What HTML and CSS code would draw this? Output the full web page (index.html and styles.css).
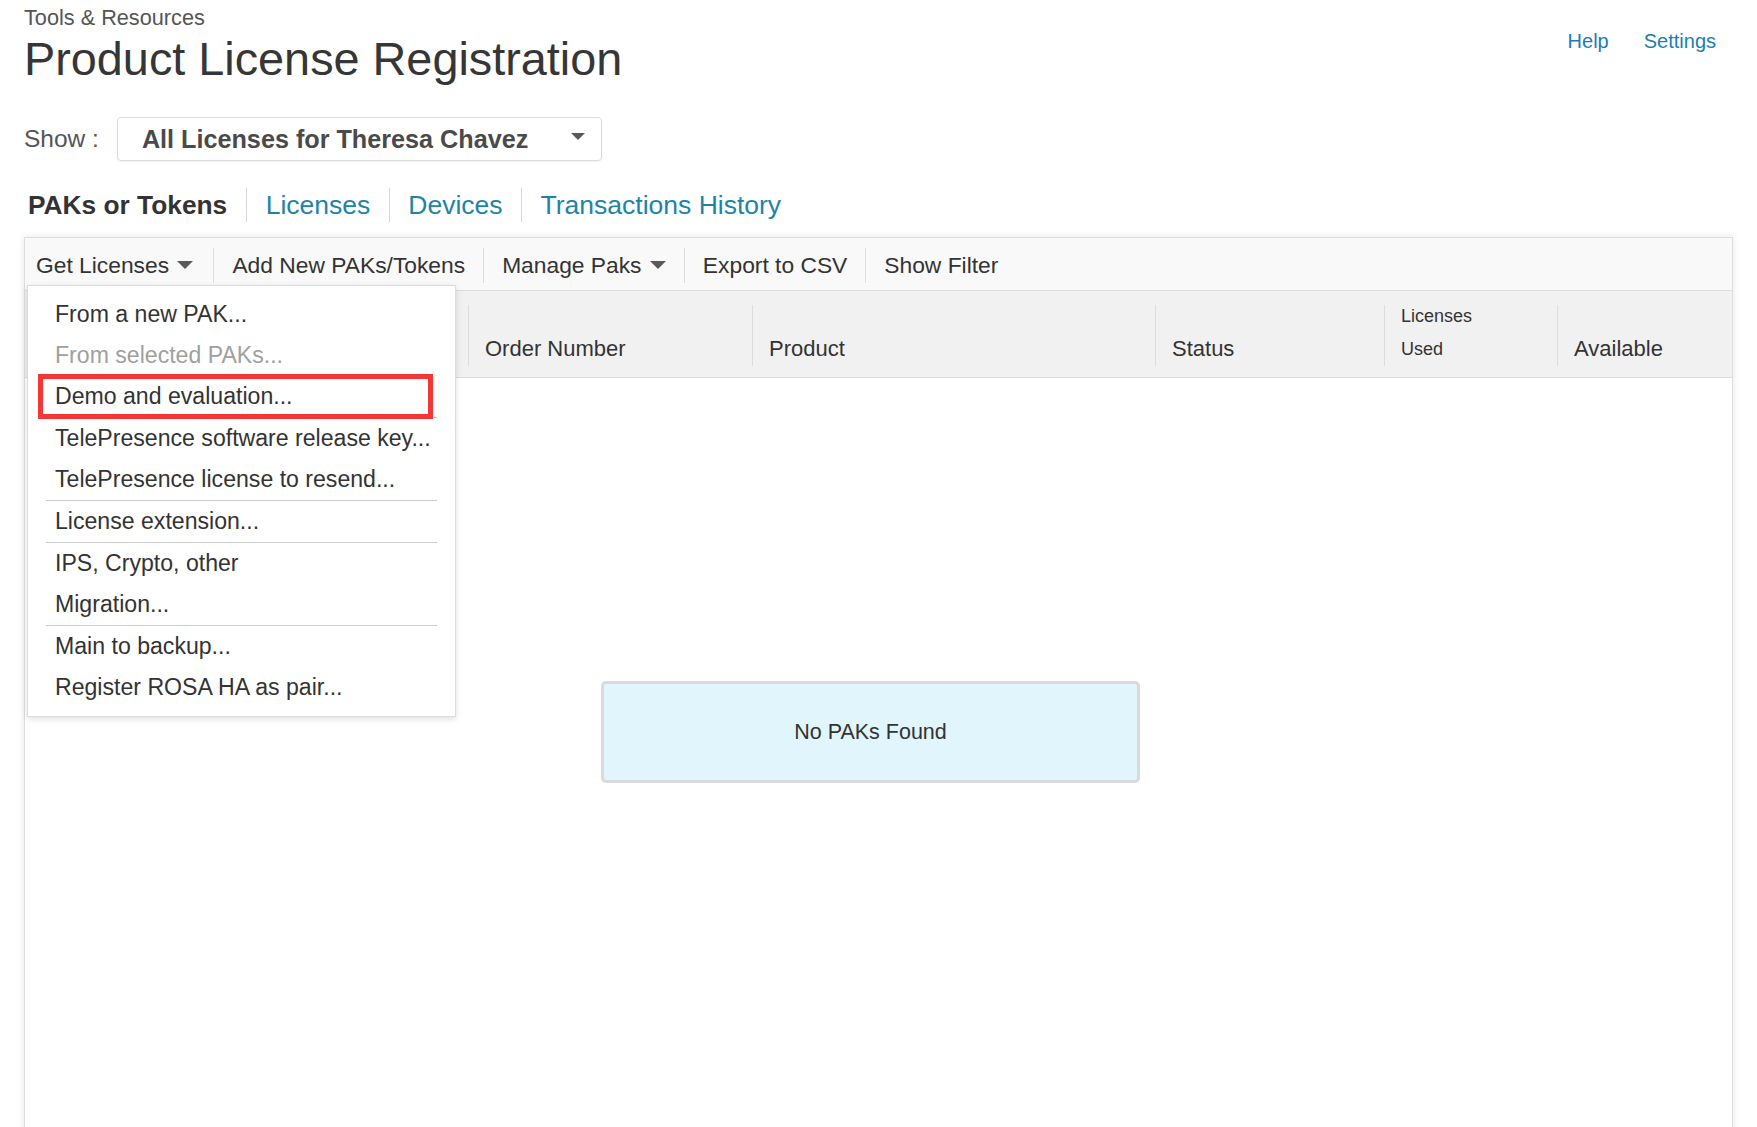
FILE: index.html
```html
<!DOCTYPE html>
<html lang="en">
<head>
<meta charset="utf-8">
<title>Product License Registration</title>
<link rel="stylesheet" href="styles.css">
</head>
<body>
<div class="page">
  <header class="top">
    <div class="titles">
      <div class="crumb">Tools &amp; Resources</div>
      <h1 class="title">Product License Registration</h1>
    </div>
    <nav class="toplinks">
      <a class="toplink" href="#">Help</a>
      <a class="toplink" href="#">Settings</a>
    </nav>
  </header>

  <div class="show-row">
    <span class="show-label">Show :</span>
    <div class="select">
      <span class="select-text">All Licenses for Theresa Chavez</span>
      <span class="caret caret-select"></span>
    </div>
  </div>

  <nav class="tabs">
    <span class="tab tab-active">PAKs or Tokens</span>
    <a class="tab" href="#">Licenses</a>
    <a class="tab" href="#">Devices</a>
    <a class="tab" href="#">Transactions History</a>
  </nav>

  <section class="card">
    <div class="toolbar">
      <div class="tool tool-first">Get Licenses <span class="caret"></span></div>
      <div class="tool">Add New PAKs/Tokens</div>
      <div class="tool">Manage Paks <span class="caret"></span></div>
      <div class="tool">Export to CSV</div>
      <div class="tool">Show Filter</div>

      <ul class="menu">
        <li class="menu-item">From a new PAK...</li>
        <li class="menu-item menu-disabled">From selected PAKs...</li>
        <li class="menu-item">Demo and evaluation...</li>
        <li class="menu-sep"></li>
        <li class="menu-item">TelePresence software release key...</li>
        <li class="menu-item">TelePresence license to resend...</li>
        <li class="menu-sep"></li>
        <li class="menu-item">License extension...</li>
        <li class="menu-sep"></li>
        <li class="menu-item">IPS, Crypto, other</li>
        <li class="menu-item">Migration...</li>
        <li class="menu-sep"></li>
        <li class="menu-item">Main to backup...</li>
        <li class="menu-item">Register ROSA HA as pair...</li>
        <li class="highlight"></li>
      </ul>
    </div>

    <div class="thead">
      <div class="th th-first"></div>
      <div class="th"><span class="th-label">Order Number</span></div>
      <div class="th"><span class="th-label">Product</span></div>
      <div class="th"><span class="th-label">Status</span></div>
      <div class="th th-small">
        <span class="th-small-label">Licenses</span>
        <span class="th-small-label">Used</span>
      </div>
      <div class="th"><span class="th-label">Available</span></div>
    </div>

    <div class="tbody">
      <div class="empty">No PAKs Found</div>
    </div>
  </section>
</div>
</body>
</html>
```

FILE: styles.css
```css
* {
  box-sizing: border-box;
}

html, body {
  margin: 0;
  padding: 0;
  background: #ffffff;
  overflow: hidden;
}

body {
  font-family: "Liberation Sans", Arial, sans-serif;
  color: #333333;
}

a {
  text-decoration: none;
}

.page {
  padding: 0 24px;
}

/* ---------- Header ---------- */
.top {
  display: flex;
  justify-content: space-between;
  align-items: flex-start;
}

.crumb {
  margin-top: 6px;
  font-size: 21.7px;
  line-height: 24px;
  color: #555555;
}

.title {
  margin: 3px 0 0 0;
  font-size: 46.8px;
  line-height: 52px;
  font-weight: normal;
  color: #363636;
}

.toplinks {
  display: flex;
  gap: 35px;
  margin-top: 30px;
  margin-right: 17px;
}

.toplink {
  font-size: 20px;
  line-height: 23px;
  color: #1d7db4;
}

/* ---------- Show select ---------- */
.show-row {
  display: flex;
  align-items: center;
  margin-top: 32px;
}

.show-label {
  font-size: 24.5px;
  color: #555555;
  margin-right: 18px;
}

.select {
  display: flex;
  align-items: center;
  gap: 43px;
  height: 44px;
  padding: 0 16px 0 24px;
  border: 1px solid #dcdcdc;
  border-radius: 4px;
  box-shadow: 0 1px 2px rgba(0, 0, 0, 0.06);
  background: #ffffff;
}

.select-text {
  font-size: 25.2px;
  font-weight: bold;
  color: #4a4a4a;
}

.caret {
  display: inline-block;
  width: 0;
  height: 0;
  border-left: 8px solid transparent;
  border-right: 8px solid transparent;
  border-top: 8px solid #5a5a5a;
  vertical-align: middle;
  margin-left: 2px;
  position: relative;
  top: -2px;
}

.caret-select {
  border-left-width: 7px;
  border-right-width: 7px;
  border-top-width: 7px;
  margin-left: 0;
  top: -3px;
}

/* ---------- Tabs ---------- */
.tabs {
  display: flex;
  margin-top: 27px;
  height: 34px;
}

.tab {
  font-size: 26.5px;
  line-height: 34px;
  padding: 0 18.5px;
  color: #1e84a6;
  border-left: 1px solid #d6d6d6;
  white-space: nowrap;
}

.tab-active {
  border-left: none;
  padding-left: 4px;
  padding-right: 19px;
  font-weight: bold;
  font-size: 26.3px;
  color: #333333;
}

/* ---------- Card ---------- */
.card {
  margin-top: 15px;
  border: 1px solid #dddddd;
  border-bottom: none;
  min-height: 900px;
  box-shadow: 0 0 7px rgba(0, 0, 0, 0.10);
  background: #ffffff;
}

.toolbar {
  position: relative;
  display: flex;
  height: 53px;
  padding-top: 10px;
  background: #f9f9f9;
  border-bottom: 1px solid #dddddd;
}

.tool {
  font-size: 22.8px;
  line-height: 35px;
  height: 35px;
  padding: 0 18px;
  border-left: 1px solid #dddddd;
  color: #333333;
  white-space: nowrap;
}

.tool-first {
  border-left: none;
  padding-left: 11px;
  padding-right: 20px;
}

/* ---------- Dropdown menu ---------- */
.menu {
  position: absolute;
  left: 2px;
  top: 47px;
  width: 429px;
  margin: 0;
  padding: 8px 0;
  list-style: none;
  background: #ffffff;
  border: 1px solid #dddddd;
  box-shadow: 0 2px 6px rgba(0, 0, 0, 0.13);
  z-index: 10;
}

.menu-item {
  height: 41px;
  line-height: 41px;
  padding-left: 27px;
  font-size: 23.1px;
  color: #333333;
  white-space: nowrap;
}

.menu-disabled {
  color: #a0a0a0;
}

.menu-sep {
  height: 1px;
  margin: 0 18px;
  background: #cccccc;
}

.highlight {
  position: absolute;
  left: 10px;
  top: 88px;
  width: 395px;
  height: 45px;
  border: 5px solid #f53636;
}

/* ---------- Table head ---------- */
.thead {
  display: grid;
  grid-template-columns: 443px 284px 403px 229px 173px 1fr;
  height: 87px;
  padding-top: 14px;
  background: #f1f1f1;
  border-bottom: 1px solid #dddddd;
}

.th {
  display: flex;
  flex-direction: column;
  justify-content: flex-end;
  height: 61px;
  padding: 0 0 3px 16px;
  border-left: 1px solid #dcdcdc;
}

.th-first {
  border-left: none;
}

.th-label {
  font-size: 22px;
  line-height: 28px;
  color: #333333;
}

.th-small {
  padding-bottom: 0;
}

.th-small-label {
  font-size: 18px;
  line-height: 33px;
  color: #333333;
}

/* ---------- Body ---------- */
.tbody {
  padding-top: 303px;
}

.empty {
  margin-left: 576px;
  width: 539px;
  height: 102px;
  display: flex;
  align-items: center;
  justify-content: center;
  background: #e1f5fc;
  border: 3px solid #dadada;
  border-radius: 5px;
  font-size: 21.5px;
  color: #333333;
}
```
